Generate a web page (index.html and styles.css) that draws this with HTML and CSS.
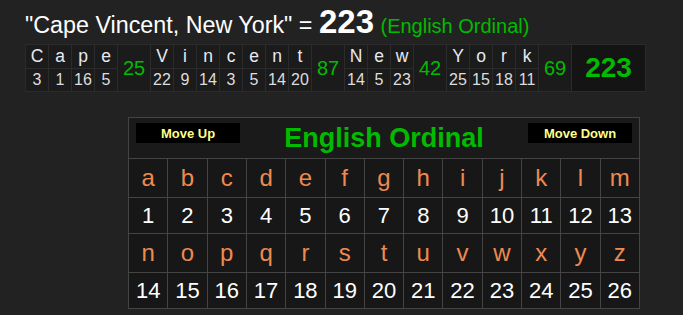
FILE: index.html
```html
<!DOCTYPE html>
<html>
<head>
<meta charset="utf-8">
<link rel="stylesheet" href="styles.css">
</head>
<body>
<div class="top">
  <div class="title">"Cape Vincent, New York" = <span class="total">223</span> <span class="cipher">(English Ordinal)</span></div>
  <div class="breakdown">
    <div class="l">C</div><div class="l">a</div><div class="l">p</div><div class="l">e</div><div class="sum c5">25</div>
    <div class="l">V</div><div class="l">i</div><div class="l">n</div><div class="l">c</div><div class="l">e</div><div class="l">n</div><div class="l">t</div><div class="sum c13">87</div>
    <div class="l">N</div><div class="l">e</div><div class="l">w</div><div class="sum c17">42</div>
    <div class="l">Y</div><div class="l">o</div><div class="l">r</div><div class="l">k</div><div class="sum c22">69</div>
    <div class="grand">223</div>
    <div class="n">3</div><div class="n">1</div><div class="n">16</div><div class="n">5</div>
    <div class="n">22</div><div class="n">9</div><div class="n">14</div><div class="n">3</div><div class="n">5</div><div class="n">14</div><div class="n">20</div>
    <div class="n">14</div><div class="n">5</div><div class="n">23</div>
    <div class="n">25</div><div class="n">15</div><div class="n">18</div><div class="n">11</div>
  </div>
</div>
<div class="chart">
  <div class="head">
    <div class="btn">Move Up</div>
    <div class="head-title">English Ordinal</div>
    <div class="btn">Move Down</div>
  </div>
  <div class="lt">a</div><div class="lt">b</div><div class="lt">c</div><div class="lt">d</div><div class="lt">e</div><div class="lt">f</div><div class="lt">g</div><div class="lt">h</div><div class="lt">i</div><div class="lt">j</div><div class="lt">k</div><div class="lt">l</div><div class="lt">m</div>
  <div class="nm">1</div><div class="nm">2</div><div class="nm">3</div><div class="nm">4</div><div class="nm">5</div><div class="nm">6</div><div class="nm">7</div><div class="nm">8</div><div class="nm">9</div><div class="nm">10</div><div class="nm">11</div><div class="nm">12</div><div class="nm">13</div>
  <div class="lt">n</div><div class="lt">o</div><div class="lt">p</div><div class="lt">q</div><div class="lt">r</div><div class="lt">s</div><div class="lt">t</div><div class="lt">u</div><div class="lt">v</div><div class="lt">w</div><div class="lt">x</div><div class="lt">y</div><div class="lt">z</div>
  <div class="nm">14</div><div class="nm">15</div><div class="nm">16</div><div class="nm">17</div><div class="nm">18</div><div class="nm">19</div><div class="nm">20</div><div class="nm">21</div><div class="nm">22</div><div class="nm">23</div><div class="nm">24</div><div class="nm">25</div><div class="nm">26</div>
</div>
</body>
</html>
```
FILE: styles.css
```css
html, body {
  margin: 0;
  padding: 0;
  background: #222;
  font-family: "Liberation Sans", Arial, sans-serif;
}
.top {
  padding: 5px 0 0 25px;
}
.title {
  color: #fff;
  font-size: 23.3px;
  line-height: 34px;
  height: 39px;
  white-space: nowrap;
}
.title .total {
  font-size: 33px;
  font-weight: bold;
}
.title .cipher {
  color: #0b0;
  font-size: 20px;
}
.breakdown {
  display: grid;
  width: max-content;
  grid-template-columns:
    repeat(4, 22px) 32px
    repeat(7, 22px) 32px
    repeat(3, 22px) 32px
    repeat(4, 22px) 32px
    73px;
  grid-template-rows: 23px 22px;
  gap: 1px;
  padding: 1px;
  background: #2b2b2b;
}
.breakdown > div {
  background: #1b1b1b;
  display: flex;
  align-items: center;
  justify-content: center;
}
.breakdown .l {
  color: #e6eaf0;
  font-size: 17.5px;
}
.breakdown .n {
  color: #ddd;
  font-size: 16px;
}
.breakdown .sum {
  grid-row: 1 / span 2;
  color: #0b0;
  font-size: 20px;
}
.breakdown .c5 { grid-column: 5; }
.breakdown .c13 { grid-column: 13; }
.breakdown .c17 { grid-column: 17; }
.breakdown .c22 { grid-column: 22; }
.breakdown .grand {
  grid-column: 23;
  grid-row: 1 / span 2;
  color: #0b0;
  font-size: 28px;
  font-weight: bold;
  background: #141414;
}
.chart {
  margin: 25px 0 0 128px;
  width: 512px;
  box-sizing: border-box;
  display: grid;
  grid-template-columns: repeat(13, 1fr);
  grid-template-rows: 40px 38px 35px 38px 35px;
  gap: 1px;
  padding: 1px;
  background: #444;
}
.chart > div {
  background: #171717;
  display: flex;
  align-items: center;
  justify-content: center;
}
.chart .head {
  grid-column: 1 / span 13;
  background: #1a1a1a;
  justify-content: space-between;
  align-items: flex-start;
  padding: 5px 7px 0 7px;
}
.btn {
  width: 104px;
  height: 20px;
  background: #000;
  color: #ffff88;
  font-size: 13px;
  font-weight: bold;
  display: flex;
  align-items: center;
  justify-content: center;
}
.head-title {
  color: #0b0;
  font-size: 27px;
  font-weight: bold;
  line-height: 30px;
  margin-top: 0;
}
.chart .lt {
  color: #ee8a50;
  font-size: 24px;
}
.chart .nm {
  color: #fff;
  font-size: 22px;
}
```
